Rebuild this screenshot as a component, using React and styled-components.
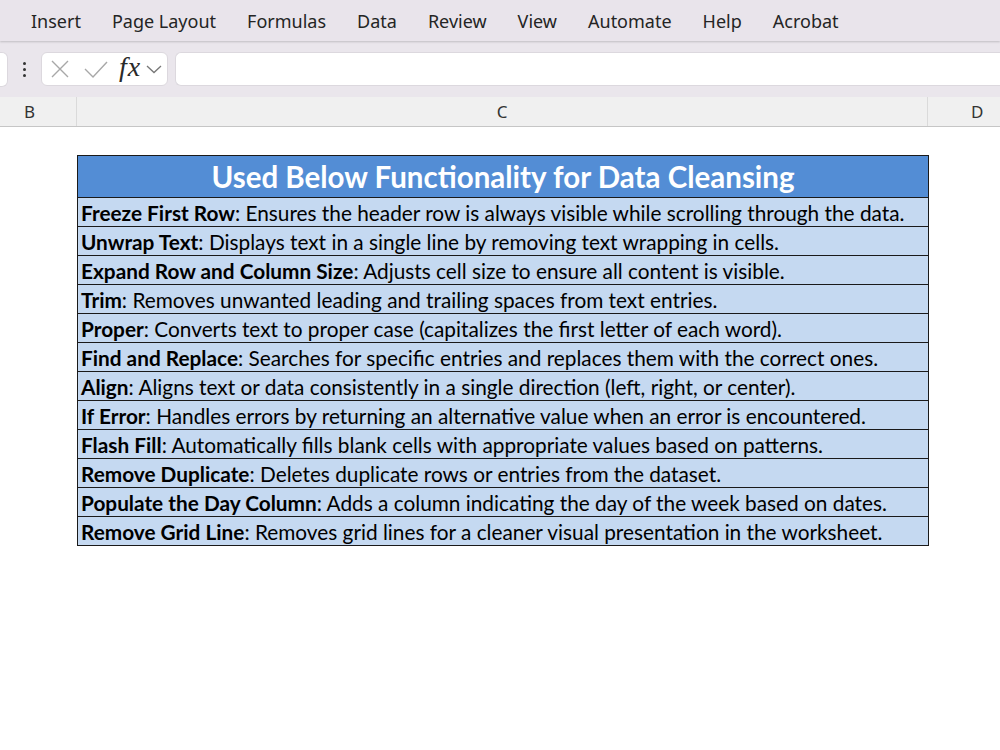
import styled, { createGlobalStyle } from "styled-components";

const GlobalStyle = createGlobalStyle`
  html, body {
    margin: 0;
    padding: 0;
    background: #ffffff;
  }
  body {
    font-family: "Noto Sans", "Open Sans", sans-serif;
    overflow: hidden;
  }
`;

const TABS = ["Insert", "Page Layout", "Formulas", "Data", "Review", "View", "Automate", "Help", "Acrobat"];

const ROWS = [
  ["Freeze First Row", "Ensures the header row is always visible while scrolling through the data."],
  ["Unwrap Text", "Displays text in a single line by removing text wrapping in cells."],
  ["Expand Row and Column Size", "Adjusts cell size to ensure all content is visible."],
  ["Trim", "Removes unwanted leading and trailing spaces from text entries."],
  ["Proper", "Converts text to proper case (capitalizes the first letter of each word)."],
  ["Find and Replace", "Searches for specific entries and replaces them with the correct ones."],
  ["Align", "Aligns text or data consistently in a single direction (left, right, or center)."],
  ["If Error", "Handles errors by returning an alternative value when an error is encountered."],
  ["Flash Fill", "Automatically fills blank cells with appropriate values based on patterns."],
  ["Remove Duplicate", "Deletes duplicate rows or entries from the dataset."],
  ["Populate the Day Column", "Adds a column indicating the day of the week based on dates."],
  ["Remove Grid Line", "Removes grid lines for a cleaner visual presentation in the worksheet."],
];

const Page = styled.div`
  width: 1000px;
  height: 750px;
  display: flex;
  flex-direction: column;
  background: #ffffff;
`;

const TabBar = styled.div`
  height: 41px;
  background: #e9e4eb;
  display: flex;
  align-items: center;
  padding-left: 31px;
  gap: 31px;
  box-shadow: 0 1px 2px rgba(0, 0, 0, 0.18);
  position: relative;
  z-index: 1;
`;

const Tab = styled.span`
  font-size: 18px;
  color: #242424;
`;

const FormulaRow = styled.div`
  height: 56px;
  background: #eae6ec;
  display: flex;
  align-items: center;
`;

const NameBoxEdge = styled.div`
  width: 7px;
  height: 33px;
  background: #ffffff;
  border: 1px solid #dcd8de;
  border-left: none;
  border-radius: 0 6px 6px 0;
`;

const Dots = styled.div`
  width: 33px;
  display: flex;
  flex-direction: column;
  align-items: center;
  gap: 3px;
  span {
    width: 3px;
    height: 3px;
    background: #333;
    border-radius: 50%;
  }
`;

const ButtonBox = styled.div`
  width: 127px;
  height: 34px;
  box-sizing: border-box;
  background: #ffffff;
  border: 1px solid #dcd8de;
  border-radius: 6px;
  display: flex;
  align-items: center;
  padding-left: 7px;
  margin-right: 7px;
`;

const Fx = styled.span`
  font-family: "Liberation Serif", serif;
  font-style: italic;
  font-size: 28px;
  color: #2a2a2a;
  margin: -4px 0 0 10px;
  letter-spacing: 1px;
`;

const FormulaInput = styled.div`
  flex: 1;
  height: 34px;
  box-sizing: border-box;
  background: #ffffff;
  border: 1px solid #dcd8de;
  border-right: none;
  border-radius: 6px 0 0 6px;
`;

const ColHeader = styled.div`
  height: 29px;
  background: #f0f0f0;
  border-bottom: 1px solid #c6c6c6;
  display: grid;
  grid-template-columns: 77px 851px 1fr;
`;

const ColCell = styled.div`
  display: flex;
  align-items: center;
  justify-content: ${(p) => (p.start ? "flex-start" : "center")};
  font-size: 17px;
  color: #333;
  padding: ${(p) => p.pad || "0"};
  border-right: ${(p) => (p.last ? "none" : "1px solid #dadada")};
`;

const Sheet = styled.div`
  flex: 1;
  padding: 28px 0 0 77px;
`;

const Table = styled.div`
  width: 852px;
  box-sizing: border-box;
  border: 1px solid #1a1a1a;
  font-family: "Lato", "Carlito", sans-serif;
`;

const Title = styled.div`
  height: 41px;
  background: #538dd5;
  color: #ffffff;
  font-weight: 700;
  font-size: 29.5px;
  display: flex;
  align-items: center;
  justify-content: center;
  border-bottom: 1px solid #1a1a1a;
`;

const Row = styled.div`
  height: 28px;
  background: #c5d9f1;
  display: flex;
  align-items: center;
  padding-left: 3px;
  font-size: 20.8px;
  color: #000;
  white-space: nowrap;
  border-top: ${(p) => (p.first ? "none" : "1px solid #1a1a1a")};
  b {
    font-weight: 700;
  }
`;

const CrossIcon = () => (
  <svg width="22" height="22" viewBox="0 0 22 22">
    <path d="M3 3 L19 19 M19 3 L3 19" stroke="#a8a8a8" strokeWidth="1.4" fill="none" />
  </svg>
);

const CheckIcon = () => (
  <svg width="26" height="22" viewBox="0 0 26 22" style={{ marginLeft: 12 }}>
    <path d="M2 11 L10 19 L24 4" stroke="#a8a8a8" strokeWidth="1.4" fill="none" />
  </svg>
);

const Chevron = () => (
  <svg width="16" height="10" viewBox="0 0 16 10" style={{ marginLeft: 5 }}>
    <path d="M1 2 L8 8.5 L15 2" stroke="#777" strokeWidth="1.3" fill="none" />
  </svg>
);

export default function App() {
  return (
    <Page>
      <GlobalStyle />
      <TabBar>
        {TABS.map((t) => (
          <Tab key={t}>{t}</Tab>
        ))}
      </TabBar>
      <FormulaRow>
        <NameBoxEdge />
        <Dots>
          <span />
          <span />
          <span />
        </Dots>
        <ButtonBox>
          <CrossIcon />
          <CheckIcon />
          <Fx>fx</Fx>
          <Chevron />
        </ButtonBox>
        <FormulaInput />
      </FormulaRow>
      <ColHeader>
        <ColCell pad="0 17px 0 0">B</ColCell>
        <ColCell>C</ColCell>
        <ColCell last start pad="0 0 0 43px">
          D
        </ColCell>
      </ColHeader>
      <Sheet>
        <Table>
          <Title>Used Below Functionality for Data Cleansing</Title>
          {ROWS.map(([label, text], i) => (
            <Row key={label} first={i === 0}>
              <b>{label}</b>: {text}
            </Row>
          ))}
        </Table>
      </Sheet>
    </Page>
  );
}
